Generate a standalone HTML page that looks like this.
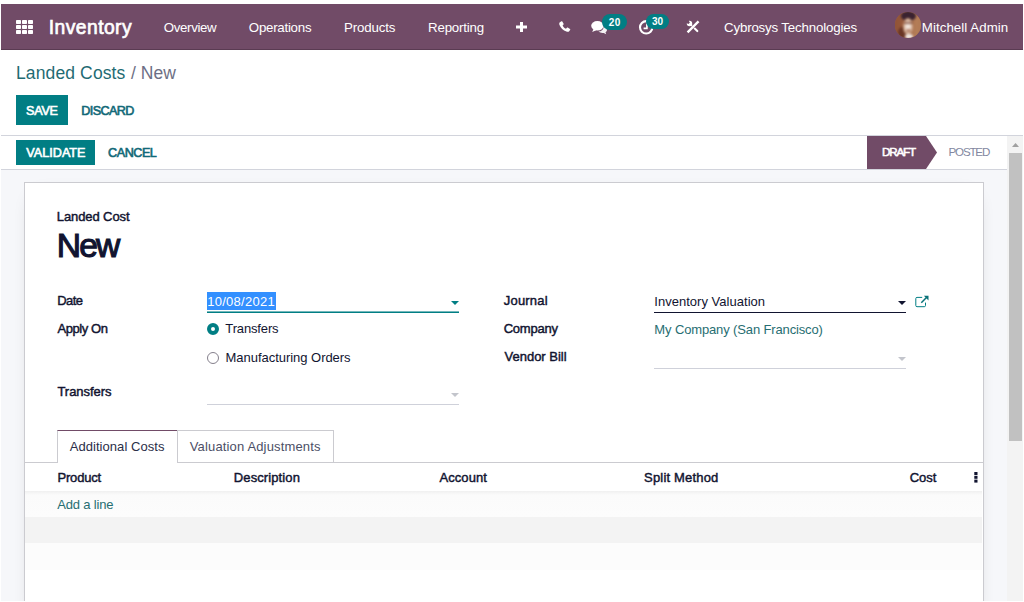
<!DOCTYPE html>
<html><head><meta charset="utf-8"><title>Odoo - Landed Costs</title>
<style>
*{box-sizing:border-box;margin:0;padding:0}
html,body{width:1024px;height:602px;overflow:hidden;background:#fff;font-family:"Liberation Sans",sans-serif;color:#111430}
.a,.t{position:absolute;white-space:nowrap}
.t{line-height:normal}
</style></head><body>
<!-- navbar -->
<div class="a" style="left:1px;top:4px;width:1022px;height:46px;background:#714b67;border-bottom:1px solid #5a3b52"></div>
<svg class="a" style="left:16px;top:20px" width="17" height="14" viewBox="0 0 17 14"><g fill="#fff"><rect x="0" y="0" width="5" height="4" rx=".7"/><rect x="6" y="0" width="5" height="4" rx=".7"/><rect x="12" y="0" width="5" height="4" rx=".7"/><rect x="0" y="5" width="5" height="4" rx=".7"/><rect x="6" y="5" width="5" height="4" rx=".7"/><rect x="12" y="5" width="5" height="4" rx=".7"/><rect x="0" y="10" width="5" height="4" rx=".7"/><rect x="6" y="10" width="5" height="4" rx=".7"/><rect x="12" y="10" width="5" height="4" rx=".7"/></g></svg>
<!-- plus -->
<svg class="a" style="left:515.700px;top:21.500px" width="11" height="10" viewBox="0 0 11 10"><path d="M4 0h3v3.500h4v3H7V10H4V6.500H0v-3h4z" fill="#fff"/></svg>
<!-- phone -->
<svg class="a" style="left:559px;top:21.200px" width="12" height="11" viewBox="0 0 12 11"><path d="M.6 1.500L2.400.3c.4-.2.700-.1.900.2l1.300 2.300c.2.300.1.600-.1.800l-.9.800c.7 1.500 1.800 2.600 3.400 3.300l.9-1c.2-.2.500-.3.800-.1l2.300 1.300c.3.200.4.500.2.800L10 10.400c-.5.500-1.500.6-2.600.2C4.200 9.400 1.600 6.800.5 3.900.1 2.900.2 2 .6 1.500z" fill="#fff"/></svg>
<!-- chat -->
<svg class="a" style="left:591px;top:20px" width="17" height="15" viewBox="0 0 17 15"><path d="M12.400 6.500c2 .4 3.600 1.700 3.600 3.300 0 1-.6 1.900-1.500 2.500l.7 1.900-2.500-1.300c-2 .3-4-.2-5.200-1.300 2.800-.3 5-2 5-4.200 0-.3 0-.6-.1-.9z" fill="#fff" opacity=".92"/><ellipse cx="6.400" cy="5.800" rx="6.200" ry="4.800" fill="#fff"/><path d="M2.800 8.500L1.200 12l4-1.800z" fill="#fff"/></svg>
<div class="a" style="left:602px;top:14px;width:25px;height:16px;border-radius:8px;background:#017e84"></div>
<!-- clock -->
<svg class="a" style="left:638px;top:19px" width="17" height="17" viewBox="0 0 17 17"><circle cx="8.200" cy="8.300" r="6.200" fill="none" stroke="#fff" stroke-width="2.100"/><path d="M8.900 4.500V9.400H5.600" fill="none" stroke="#fff" stroke-width="1.700"/></svg>
<div class="a" style="left:646px;top:14px;width:23px;height:15px;border-radius:7.500px;background:#017e84"></div>
<!-- tools -->
<svg class="a" style="left:686px;top:20px" width="14" height="14" viewBox="0 0 14 14"><path d="M4.300 4.300L11.300 11.100" stroke="#fff" stroke-width="2.100" stroke-linecap="round"/><circle cx="3.500" cy="3.500" r="2.700" fill="#fff"/><path d="M0 1.600L2.200 0 3.900 2.500 2.500 3.900 0 3z" fill="#714b67"/><path d="M11.900 2L2.100 11.900" stroke="#714b67" stroke-width="3.100"/><path d="M11.700 2.200L2.400 11.600" stroke="#fff" stroke-width="2.400" stroke-linecap="square"/></svg>
<!-- avatar -->
<div class="a" style="left:894.500px;top:12px;width:26.500px;height:26px;border-radius:50%;overflow:hidden;background:#9c6146">
<div class="a" style="left:-2px;top:-2px;width:30px;height:30px;filter:blur(.8px);background:linear-gradient(90deg,#8f5236 0,#96583a 30%,#a0694c 50%,#b47c56 75%,#b07a55 100%)">
<div class="a" style="left:8px;top:1px;width:15px;height:10px;border-radius:50%;background:#3a2230"></div>
<div class="a" style="left:5px;top:17px;width:8px;height:12px;border-radius:50%;background:#6a3626"></div>
<div class="a" style="left:10.300px;top:8px;width:10.400px;height:17px;border-radius:50%;background:radial-gradient(closest-side,#f6efea 0,#e6cfc0 55%,#c09070 100%)"></div>
<div class="a" style="left:11px;top:12px;width:9px;height:1.600px;background:#7a4a3a;opacity:.7"></div>
<div class="a" style="left:13px;top:18.700px;width:5.200px;height:3.600px;border-radius:50%;background:#a5654a;opacity:.7"></div>
<div class="a" style="left:12px;top:24px;width:8px;height:5px;border-radius:50%;background:#efe6e2"></div>
</div></div>

<!-- control panel -->
<div class="a" style="left:16px;top:95px;width:52px;height:30px;background:#017e84"></div>
<div class="a" style="left:1px;top:135px;width:1022px;height:1px;background:#d2d4dc"></div>

<!-- content bg -->
<div class="a" style="left:1px;top:136px;width:1006px;height:465px;background:#f6f7fa"></div>
<!-- statusbar -->
<div class="a" style="left:1px;top:136px;width:1006px;height:34px;background:#fff;border-bottom:1px solid #d2d4dc"></div>
<div class="a" style="left:16px;top:140px;width:79px;height:25px;background:#017e84"></div>
<svg class="a" style="left:867px;top:136px" width="71" height="33" viewBox="0 0 71 33"><path d="M0 0H59L70 16.500L59 33H0z" fill="#714b67"/></svg>

<!-- scrollbar -->
<div class="a" style="left:1007px;top:136px;width:16px;height:465px;background:#f3f3f3"></div>
<svg class="a" style="left:1012px;top:143px" width="7" height="4" viewBox="0 0 7 4"><path d="M0 4L3.500 0L7 4z" fill="#a0a0a0"/></svg>
<div class="a" style="left:1009px;top:153px;width:13px;height:288px;background:#c1c1c1"></div>

<!-- sheet -->
<div class="a" style="left:1px;top:170px;width:1006px;height:431px;overflow:hidden"><div class="a" style="left:23px;top:12px;width:960px;height:440px;background:#fff;border:1px solid #cbcbd0;box-shadow:0 5px 20px -15px rgba(0,0,0,.45)"></div></div>

<!-- date field -->
<div class="a" style="left:207px;top:292px;width:69px;height:18px;background:#3390ff"></div>
<div class="a" style="left:207px;top:311px;width:252px;height:2px;background:linear-gradient(rgba(1,126,132,.55) 50%,#017e84 50%)"></div>
<svg class="a" style="left:451px;top:301px" width="8" height="4" viewBox="0 0 8 4"><path d="M0 0H8L4 4z" fill="#017e84"/></svg>
<!-- radios -->
<div class="a" style="left:207px;top:323px;width:12px;height:12px;border-radius:50%;border:4px solid #017e84;background:#fff"></div>
<div class="a" style="left:207px;top:352px;width:12px;height:12px;border-radius:50%;border:1px solid #85808c;background:#fff"></div>
<!-- transfers -->
<div class="a" style="left:207px;top:404px;width:252px;height:1px;background:#cfd1da"></div>
<svg class="a" style="left:451px;top:393px" width="8" height="4" viewBox="0 0 8 4"><path d="M0 0H8L4 4z" fill="#c3c5cc"/></svg>
<!-- journal -->
<div class="a" style="left:654px;top:312px;width:252px;height:1px;background:#111430"></div>
<svg class="a" style="left:898px;top:301px" width="8" height="4" viewBox="0 0 8 4"><path d="M0 0H8L4 4z" fill="#111430"/></svg>
<svg class="a" style="left:915px;top:295px" width="14" height="13" viewBox="0 0 14 13"><path d="M10.500 7.600V10.500a1.200 1.200 0 0 1-1.200 1.200H2a1.200 1.200 0 0 1-1.200-1.200V3.600a1.200 1.200 0 0 1 1.200-1.200H7.200" fill="none" stroke="#017e84" stroke-width="1"/><path d="M6.300 7.700L12.200 1.800" stroke="#0a7278" stroke-width="1.500"/><path d="M8.900.8H13.500V5.400z" fill="#0a7278"/></svg>
<!-- vendor bill -->
<div class="a" style="left:654px;top:368px;width:252px;height:1px;background:#cfd1da"></div>
<svg class="a" style="left:898px;top:357px" width="8" height="4" viewBox="0 0 8 4"><path d="M0 0H8L4 4z" fill="#c3c5cc"/></svg>

<!-- tabs -->
<div class="a" style="left:25px;top:462px;width:958px;height:1px;background:#cbcbd0"></div>
<div class="a" style="left:57px;top:430px;width:121px;height:33px;background:#fff;border:1px solid #cbcbd0;border-bottom:0;border-top:1px solid #714b67"></div>
<div class="a" style="left:177px;top:430px;width:157px;height:33px;background:#fff;border:1px solid #cbcbd0"></div>

<!-- table -->
<svg class="a" style="left:974px;top:472px" width="4" height="11" viewBox="0 0 4 11"><rect x=".3" y="0" width="3.200" height="3" fill="#111430"/><rect x=".3" y="3.800" width="3.200" height="3" fill="#111430"/><rect x=".3" y="7.600" width="3.200" height="3" fill="#111430"/></svg>
<div class="a" style="left:25px;top:491px;width:957px;height:26px;background:linear-gradient(#f0f0f0,#fbfbfb 4px,#fcfcfc)"></div>
<div class="a" style="left:25px;top:517px;width:957px;height:26px;background:#f3f3f3"></div>
<div class="a" style="left:25px;top:543px;width:957px;height:27px;background:#fcfcfc"></div>
<div class="t" style="left:48.77px;top:17px;font-size:19.3px;color:#fff;letter-spacing:0.444px;-webkit-text-stroke:0.66px #fff;">Inventory</div>
<div class="t" style="left:163.86px;top:20px;font-size:13.3px;color:#fff;letter-spacing:-0.386px;">Overview</div>
<div class="t" style="left:248.86px;top:20px;font-size:13.3px;color:#fff;letter-spacing:-0.264px;">Operations</div>
<div class="t" style="left:344.05px;top:20px;font-size:13.3px;color:#fff;letter-spacing:-0.155px;">Products</div>
<div class="t" style="left:428.05px;top:20px;font-size:13.3px;color:#fff;letter-spacing:-0.198px;">Reporting</div>
<div class="t" style="left:723.99px;top:20px;font-size:13.3px;color:#fff;letter-spacing:-0.167px;">Cybrosys Technologies</div>
<div class="t" style="left:921.85px;top:20px;font-size:13.3px;color:#fff;letter-spacing:0.047px;">Mitchell Admin</div>
<div class="t" style="left:608.68px;top:17px;font-size:10px;font-weight:bold;color:#fff;letter-spacing:0.524px;">20</div>
<div class="t" style="left:652.09px;top:16px;font-size:10px;font-weight:bold;color:#fff;letter-spacing:-0.087px;">30</div>
<div class="t" style="left:15.98px;top:63px;font-size:17.5px;color:#1f6b73;letter-spacing:0.127px;">Landed Costs</div>
<div class="t" style="left:130.94px;top:63px;font-size:17.5px;color:#6d6f85;letter-spacing:0.054px;">/ New</div>
<div class="t" style="left:26.04px;top:104px;font-size:12.6px;color:#fff;letter-spacing:-0.236px;-webkit-text-stroke:0.63px #fff;">SAVE</div>
<div class="t" style="left:81.27px;top:104px;font-size:12.6px;color:#126978;letter-spacing:-0.582px;-webkit-text-stroke:0.63px #126978;">DISCARD</div>
<div class="t" style="left:26.37px;top:146px;font-size:12.6px;color:#fff;letter-spacing:0.011px;-webkit-text-stroke:0.63px #fff;">VALIDATE</div>
<div class="t" style="left:108.10px;top:146px;font-size:12.6px;color:#126978;letter-spacing:-0.474px;-webkit-text-stroke:0.63px #126978;">CANCEL</div>
<div class="t" style="left:881.99px;top:145px;font-size:11.6px;color:#fff;letter-spacing:-1.138px;-webkit-text-stroke:0.58px #fff;">DRAFT</div>
<div class="t" style="left:948.48px;top:145px;font-size:11.6px;color:#8287a0;letter-spacing:-1.170px;">POSTED</div>
<div class="t" style="left:56.83px;top:209px;font-size:13px;color:#111430;letter-spacing:-0.100px;-webkit-text-stroke:0.44px #111430;">Landed Cost</div>
<div class="t" style="left:56.74px;top:227px;font-size:33.6px;color:#111430;letter-spacing:-1.840px;-webkit-text-stroke:1.14px #111430;">New</div>
<div class="t" style="left:57.23px;top:293px;font-size:13px;color:#111430;letter-spacing:-0.602px;-webkit-text-stroke:0.44px #111430;">Date</div>
<div class="t" style="left:57.55px;top:321px;font-size:13px;color:#111430;letter-spacing:-0.445px;-webkit-text-stroke:0.44px #111430;">Apply On</div>
<div class="t" style="left:57.41px;top:384px;font-size:13px;color:#111430;letter-spacing:-0.034px;-webkit-text-stroke:0.44px #111430;">Transfers</div>
<div class="t" style="left:207.14px;top:294px;font-size:13px;color:#fff;letter-spacing:0.293px;">10/08/2021</div>
<div class="t" style="left:225.32px;top:321px;font-size:13px;color:#111430;letter-spacing:-0.141px;">Transfers</div>
<div class="t" style="left:225.56px;top:350px;font-size:13px;color:#111430;letter-spacing:-0.035px;">Manufacturing Orders</div>
<div class="t" style="left:503.82px;top:293px;font-size:13px;color:#111430;letter-spacing:0.179px;-webkit-text-stroke:0.44px #111430;">Journal</div>
<div class="t" style="left:503.67px;top:321px;font-size:13px;color:#111430;letter-spacing:-0.232px;-webkit-text-stroke:0.44px #111430;">Company</div>
<div class="t" style="left:504.55px;top:349px;font-size:13px;color:#111430;letter-spacing:-0.014px;-webkit-text-stroke:0.44px #111430;">Vendor Bill</div>
<div class="t" style="left:654.33px;top:294px;font-size:13px;color:#111430;letter-spacing:0.021px;">Inventory Valuation</div>
<div class="t" style="left:654.36px;top:322px;font-size:13px;color:#276e72;letter-spacing:-0.136px;">My Company (San Francisco)</div>
<div class="t" style="left:69.70px;top:439px;font-size:13px;color:#2b2e48;letter-spacing:0.056px;">Additional Costs</div>
<div class="t" style="left:189.78px;top:439px;font-size:13px;color:#4c4f66;letter-spacing:0.150px;">Valuation Adjustments</div>
<div class="t" style="left:57.43px;top:470px;font-size:13px;color:#111430;letter-spacing:-0.166px;-webkit-text-stroke:0.44px #111430;">Product</div>
<div class="t" style="left:233.83px;top:470px;font-size:13px;color:#111430;letter-spacing:0.103px;-webkit-text-stroke:0.44px #111430;">Description</div>
<div class="t" style="left:439.55px;top:470px;font-size:13px;color:#111430;letter-spacing:0.046px;-webkit-text-stroke:0.44px #111430;">Account</div>
<div class="t" style="left:644.12px;top:470px;font-size:13px;color:#111430;letter-spacing:0.179px;-webkit-text-stroke:0.44px #111430;">Split Method</div>
<div class="t" style="left:909.67px;top:470px;font-size:13px;color:#111430;letter-spacing:0.021px;-webkit-text-stroke:0.44px #111430;">Cost</div>
<div class="t" style="left:57.20px;top:497px;font-size:13px;color:#276e72;letter-spacing:-0.169px;">Add a line</div>
</body></html>
